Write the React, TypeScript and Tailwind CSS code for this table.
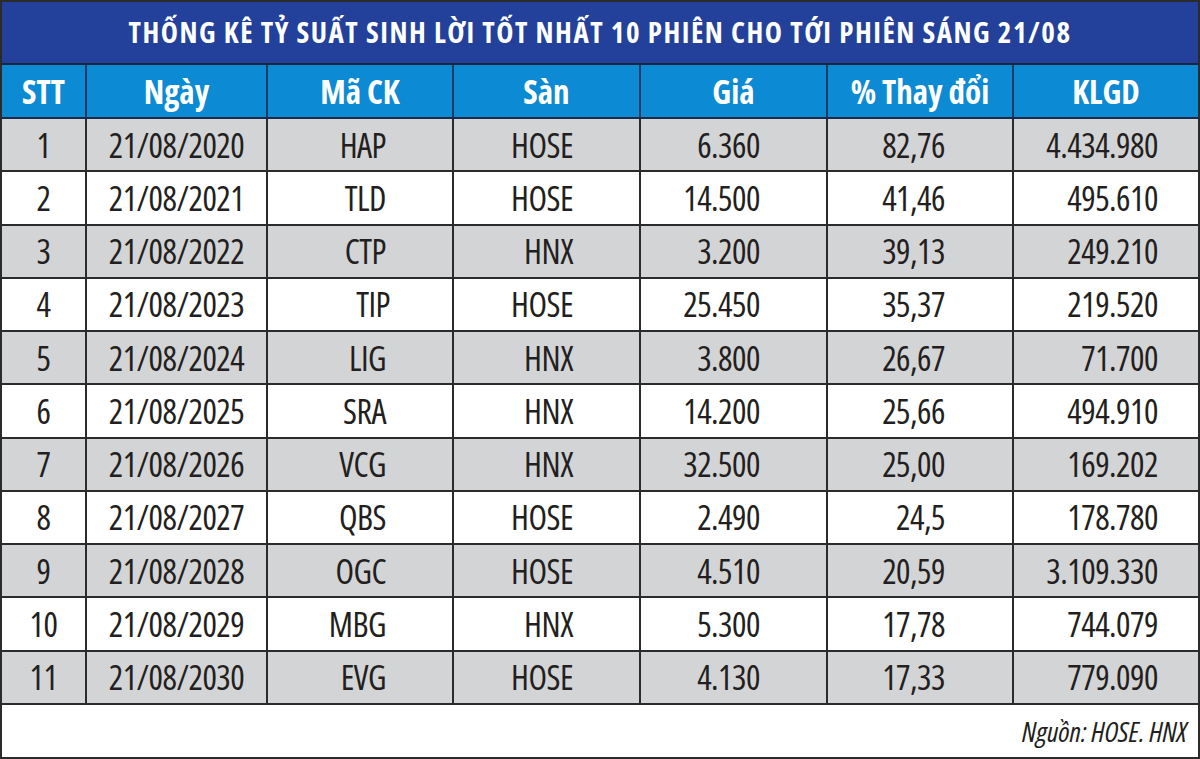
import React from "react";

const rows = [
  ["1", "21/08/2020", "HAP", "HOSE", "6.360", "82,76", "4.434.980"],
  ["2", "21/08/2021", "TLD", "HOSE", "14.500", "41,46", "495.610"],
  ["3", "21/08/2022", "CTP", "HNX", "3.200", "39,13", "249.210"],
  ["4", "21/08/2023", "TIP", "HOSE", "25.450", "35,37", "219.520"],
  ["5", "21/08/2024", "LIG", "HNX", "3.800", "26,67", "71.700"],
  ["6", "21/08/2025", "SRA", "HNX", "14.200", "25,66", "494.910"],
  ["7", "21/08/2026", "VCG", "HNX", "32.500", "25,00", "169.202"],
  ["8", "21/08/2027", "QBS", "HOSE", "2.490", "24,5", "178.780"],
  ["9", "21/08/2028", "OGC", "HOSE", "4.510", "20,59", "3.109.330"],
  ["10", "21/08/2029", "MBG", "HNX", "5.300", "17,78", "744.079"],
  ["11", "21/08/2030", "EVG", "HOSE", "4.130", "17,33", "779.090"],
];

const headers = ["STT", "Ngày", "Mã CK", "Sàn", "Giá", "% Thay đổi", "KLGD"];

const font = "font-['Open_Sans','Liberation_Sans',sans-serif] font-stretch-condensed";

export default function App() {
  return (
    <div className={`w-[1200px] h-[759px] bg-white border-2 border-[#2b2b2b] flex flex-col ${font}`}>
      <div className="h-[63px] bg-[#23409a] border-b-2 border-[#1c2540] flex items-center justify-center pb-[2px]">
        <span className="text-white font-bold text-[29px] leading-none tracking-[1.5px]">
          THỐNG KÊ TỶ SUẤT SINH LỜI TỐT NHẤT 10 PHIÊN CHO TỚI PHIÊN SÁNG 21/08
        </span>
      </div>
      <div className="h-[54px] bg-[#0c8ad3] border-b-2 border-[#1c2a4a] grid grid-cols-[85px_181px_186px_187px_187px_186px_1fr]">
        {headers.map((h, i) => (
          <div
            key={h}
            className={`flex items-center justify-center text-white font-bold text-[33px] leading-none ${i < 6 ? "border-r-2 border-[#1c3a66]" : ""}`}
          >
            {h}
          </div>
        ))}
      </div>
      <div className="h-[586px] flex flex-col">
        {rows.map((r, idx) => (
          <div
            key={idx}
            className={`flex-1 border-b-2 border-[#2b2b2b] grid grid-cols-[85px_181px_186px_187px_187px_186px_1fr] text-[#231f20] text-[34px] tracking-[-0.5px] leading-none ${idx % 2 === 0 ? "bg-[#d3d4d6]" : "bg-white"}`}
          >
            <div className="flex items-center justify-center border-r-2 border-[#2b2b2b]">{r[0]}</div>
            <div className="flex items-center justify-center border-r-2 border-[#2b2b2b]">{r[1]}</div>
            <div className={`flex items-center justify-end border-r-2 border-[#2b2b2b] ${r[2] === "TIP" ? "pr-[62px]" : "pr-[66px]"}`}>{r[2]}</div>
            <div className="flex items-center justify-end pr-[66px] border-r-2 border-[#2b2b2b]">{r[3]}</div>
            <div className="flex items-center justify-end pr-[66px] border-r-2 border-[#2b2b2b]">{r[4]}</div>
            <div className="flex items-center justify-end pr-[67px] border-r-2 border-[#2b2b2b]">{r[5]}</div>
            <div className="flex items-center justify-end pr-[40px]">{r[6]}</div>
          </div>
        ))}
      </div>
      <div className="flex-1 flex items-center justify-end pr-[11px]">
        <span className="italic text-[28px] font-stretch-semi-condensed text-[#231f20] leading-none">Nguồn: HOSE. HNX</span>
      </div>
    </div>
  );
}
